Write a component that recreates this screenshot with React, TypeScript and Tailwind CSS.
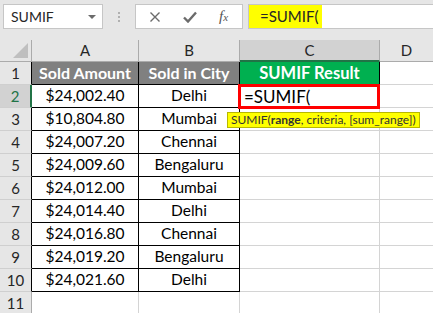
import React from "react";

const rows = [
  ["$24,002.40", "Delhi"],
  ["$10,804.80", "Mumbai"],
  ["$24,007.20", "Chennai"],
  ["$24,009.60", "Bengaluru"],
  ["$24,012.00", "Mumbai"],
  ["$24,014.40", "Delhi"],
  ["$24,016.80", "Chennai"],
  ["$24,019.20", "Bengaluru"],
  ["$24,021.60", "Delhi"],
];

const font = { fontFamily: "Lato, 'Open Sans', sans-serif" };

function TopBar() {
  return (
    <div className="h-[40px] bg-[#e6e6e6] flex items-start pt-[4px] pl-[3px]">
      <div className="w-[100px] h-[25px] bg-white border border-[#c6c6c6] flex items-center justify-between pl-[7px] pr-[6px]">
        <span className="text-[14px] text-[#262626]">SUMIF</span>
        <span className="w-0 h-0 border-l-[4px] border-r-[4px] border-t-[4px] border-l-transparent border-r-transparent border-t-[#6b6b6b]" />
      </div>
      <div className="w-[32px] h-[25px] flex flex-col items-center justify-center gap-[2px]">
        <span className="w-[2px] h-[2px] bg-[#b0b0b0]" />
        <span className="w-[2px] h-[2px] bg-[#b0b0b0]" />
        <span className="w-[2px] h-[2px] bg-[#b0b0b0]" />
      </div>
      <div className="w-[108px] h-[25px] bg-white border border-[#c6c6c6] flex items-center">
        <svg width="12" height="12" viewBox="0 0 12 12" className="ml-[13px]">
          <path d="M1.5 1.5 L10.5 10.5 M10.5 1.5 L1.5 10.5" stroke="#6b6b6b" strokeWidth="1.4" />
        </svg>
        <svg width="14" height="12" viewBox="0 0 14 12" className="ml-[22px]">
          <path d="M1 6.5 L5 10.5 L13 1.5" stroke="#6b6b6b" strokeWidth="2.4" fill="none" />
        </svg>
        <span className="ml-[22px] text-[15px] italic text-[#555]" style={{ fontFamily: "'Liberation Serif', serif" }}>
          f<span className="text-[11px]">x</span>
        </span>
      </div>
      <div className="ml-[5px] flex-1 h-[25px] bg-white border-y border-l border-[#c6c6c6] flex items-center">
        <div className="h-full w-[73px] bg-[#ffff00] flex items-center pl-[11px] text-[15px] text-[#262626]">
          =SUMIF(
        </div>
      </div>
    </div>
  );
}

function ColHead({ label, w, selected }: { label: string; w: string; selected?: boolean }) {
  return (
    <div
      className={`${w} h-[22px] flex items-center justify-center text-[15px] border-r ${
        selected ? "bg-[#d2d2d2] border-r-[#ababab] border-b-2 border-b-[#217346] text-[#262626]" : "bg-[#e6e6e6] border-[#ababab] border-b border-b-[#ababab] text-[#262626]"
      }`}
    >
      {label}
    </div>
  );
}

function RowHead({ n, selected, last }: { n: number; selected?: boolean; last?: boolean }) {
  return (
    <div
      className={`w-[32px] h-[23px] shrink-0 flex items-center justify-center text-[15px] border-b border-b-[#cfcfcf] ${
        selected
          ? "bg-[#d2d2d2] text-[#217346] border-r-2 border-r-[#217346]"
          : last
          ? "bg-[#e6e6e6] text-[#262626] border-r border-r-[#ababab]"
          : "bg-[#e6e6e6] text-[#262626] border-r border-r-black"
      }`}
    >
      {n}
    </div>
  );
}

export default function App() {
  return (
    <div className="w-[433px] h-[313px] overflow-hidden bg-white" style={font}>
      <TopBar />
      <div className="flex">
        <div className="w-[32px] h-[22px] bg-[#e6e6e6] border-r border-b border-[#ababab] relative">
          <svg width="15" height="15" className="absolute right-[3px] bottom-[3px]">
            <path d="M15 0 L15 15 L0 15 Z" fill="#bfbfbf" />
          </svg>
        </div>
        <ColHead label="A" w="w-[107px]" />
        <ColHead label="B" w="w-[101px]" />
        <ColHead label="C" w="w-[140px]" selected />
        <div className="flex-1 h-[22px] bg-[#e6e6e6] border-b border-[#ababab] flex items-center justify-center text-[15px] text-[#262626]">
          D
        </div>
      </div>

      {/* row 1 */}
      <div className="flex">
        <RowHead n={1} />
        <div className="w-[107px] h-[23px] bg-[#808080] border-r border-b border-black flex items-center justify-center text-white font-bold text-[16px]">
          Sold Amount
        </div>
        <div className="w-[101px] h-[23px] bg-[#808080] border-r border-b border-black flex items-center justify-center text-white font-bold text-[16px] whitespace-nowrap overflow-hidden">
          Sold in City
        </div>
        <div className="w-[140px] h-[23px] bg-[#00b050] border-r border-b border-black flex items-center justify-center text-white font-bold text-[16.5px]">
          SUMIF Result
        </div>
        <div className="flex-1 h-[23px] border-b border-[#d4d4d4]" />
      </div>

      {rows.map(([amt, city], i) => {
        const n = i + 2;
        return (
          <div key={n} className="flex">
            <RowHead n={n} selected={n === 2} />
            <div className="w-[107px] h-[23px] border-r border-b border-black flex items-center justify-center text-[15.5px] text-black">
              {amt}
            </div>
            <div className="w-[101px] h-[23px] border-r border-b border-black flex items-center justify-center text-[15.5px] text-black">
              {city}
            </div>
            <div className="w-[140px] h-[23px] border-r border-b border-[#d4d4d4] relative">
              {n === 2 && (
                <>
                  <div className="absolute left-[-2px] top-[-1px] right-[-1px] bottom-[-2px] border-[3px] border-[#ff0000] flex items-center pl-[3px] text-[17px] text-black z-10">
                    =SUMIF(
                  </div>
                  <div className="absolute left-[-13px] top-[27px] h-[16px] px-[3px] bg-[#ffff00] border border-[#b8b800] flex items-center text-[12px] text-[#333] whitespace-nowrap z-20">
                    SUMIF(<b>range</b>, criteria, [sum_range])
                  </div>
                </>
              )}
            </div>
            <div className="flex-1 h-[23px] border-b border-[#d4d4d4]" />
          </div>
        );
      })}

      <div className="flex">
        <RowHead n={11} last />
        <div className="w-[107px] h-[23px] border-r border-b border-[#d4d4d4]" />
        <div className="w-[101px] h-[23px] border-r border-b border-[#d4d4d4]" />
        <div className="w-[140px] h-[23px] border-r border-b border-[#d4d4d4]" />
        <div className="flex-1 h-[23px] border-b border-[#d4d4d4]" />
      </div>
    </div>
  );
}
